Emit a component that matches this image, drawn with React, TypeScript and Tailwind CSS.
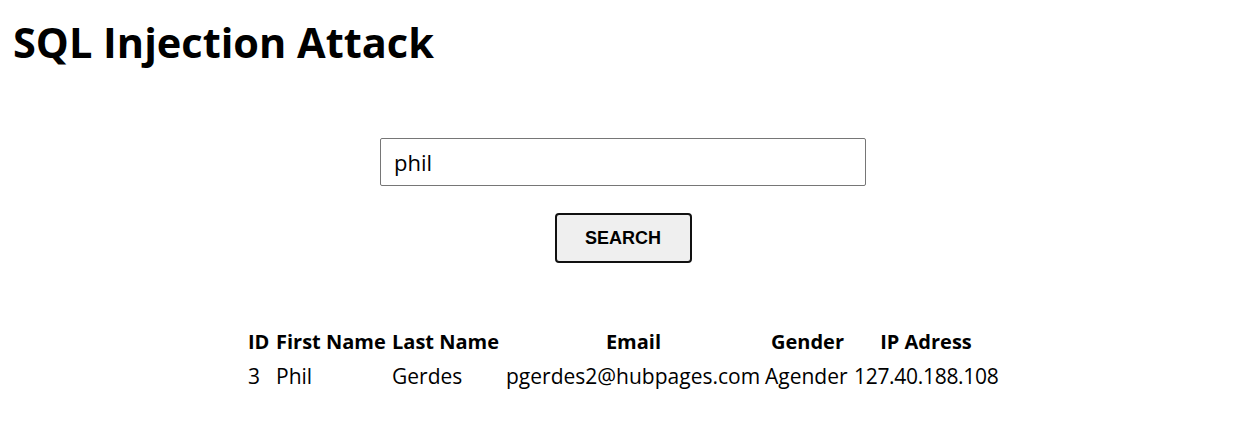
import React from "react";

const rows = [
  { id: 3, first: "Phil", last: "Gerdes", email: "pgerdes2@hubpages.com", gender: "Agender", ip: "127.40.188.108" },
];

export default function App() {
  return (
    <div className="min-h-[434px] bg-white text-black" style={{ fontFamily: '"Open Sans", "Noto Sans", sans-serif' }}>
      <h1 className="pl-[13px] pt-[18px] text-[41.5px] font-bold leading-[48px]">SQL Injection Attack</h1>
      <div className="mt-[72px] flex flex-col items-center pr-[2px]">
        <input
          type="text"
          defaultValue="phil"
          className="h-[48px] w-[486px] rounded-[2px] border border-[#767676] px-[13px] text-[22px] text-black outline-none"
          style={{ fontFamily: '"Open Sans", "Noto Sans", sans-serif' }}
        />
        <button
          className="mt-[27px] h-[50px] w-[137px] rounded-[4px] border-2 border-[#111] bg-[#efefef] text-[18px] font-bold text-black"
          style={{ fontFamily: '"Liberation Sans", Arial, sans-serif' }}
        >
          SEARCH
        </button>
        <table className="mt-[61px] w-[756px] table-fixed border-separate border-spacing-[2px] text-[21px] leading-[32px]">
          <colgroup>
            <col className="w-[26px]" />
            <col className="w-[114px]" />
            <col className="w-[112px]" />
            <col className="w-[257px]" />
            <col className="w-[87px]" />
            <col className="w-[146px]" />
          </colgroup>
          <thead>
            <tr className="text-[20px]">
              <th className="whitespace-nowrap px-[1px] text-left font-bold">ID</th>
              <th className="whitespace-nowrap px-[1px] text-left font-bold">First Name</th>
              <th className="whitespace-nowrap px-[1px] text-left font-bold">Last Name</th>
              <th className="whitespace-nowrap px-[1px] text-center font-bold">Email</th>
              <th className="whitespace-nowrap px-[1px] text-center font-bold">Gender</th>
              <th className="whitespace-nowrap px-[1px] text-center font-bold">IP Adress</th>
            </tr>
          </thead>
          <tbody>
            {rows.map((r) => (
              <tr key={r.id}>
                <td className="whitespace-nowrap px-[1px]">{r.id}</td>
                <td className="whitespace-nowrap px-[1px]">{r.first}</td>
                <td className="whitespace-nowrap px-[1px]">{r.last}</td>
                <td className="whitespace-nowrap px-[1px]">{r.email}</td>
                <td className="whitespace-nowrap px-[1px]">{r.gender}</td>
                <td className="whitespace-nowrap px-[1px] tracking-[-0.3px]">{r.ip}</td>
              </tr>
            ))}
          </tbody>
        </table>
      </div>
    </div>
  );
}
